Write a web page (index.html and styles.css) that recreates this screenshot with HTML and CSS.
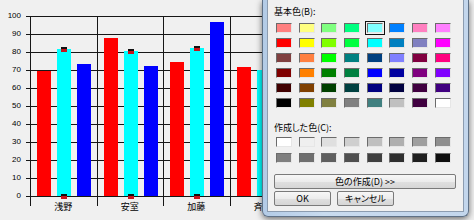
FILE: index.html
```html
<html>
<head>
  <meta charset="UTF-8">
  <title>Chart</title>
  <link rel="stylesheet" href="styles.css">
</head>
<body>
  <div class="chart">
    <div class="yaxis">
      <div>100</div><div>90</div><div>80</div><div>70</div><div>60</div><div>50</div>
      <div>40</div><div>30</div><div>20</div><div>10</div><div>0</div>
    </div>
    <div class="area">
      <div class="plot">
        <div class="cat">
          <div class="bar red" style="height:125px"></div>
          <div class="bar cyan mark" style="height:147px"></div>
          <div class="bar blue" style="height:132px"></div>
        </div>
        <div class="cat">
          <div class="bar red" style="height:158px"></div>
          <div class="bar cyan mark" style="height:145px"></div>
          <div class="bar blue" style="height:130px"></div>
        </div>
        <div class="cat">
          <div class="bar red" style="height:134px"></div>
          <div class="bar cyan mark" style="height:148px"></div>
          <div class="bar blue" style="height:174px"></div>
        </div>
        <div class="cat">
          <div class="bar red" style="height:129px"></div>
          <div class="bar cyan" style="height:126px"></div>
          <div class="bar blue" style="height:120px"></div>
        </div>
        <div class="cat"></div>
        <div class="cat"></div>
      </div>
      <div class="names">
        <div>浅野</div><div>安室</div><div>加藤</div><div>斉藤</div><div></div><div></div>
      </div>
    </div>
  </div>

  <div class="dlg">
    <div class="client">
      <div class="lbl">基本色(B):</div>
      <div class="swatches">
        <span style="background:#ff8080"></span><span style="background:#ffff80"></span><span style="background:#80ff80"></span><span style="background:#00ff80"></span><span class="sel" style="background:#80ffff"></span><span style="background:#0080ff"></span><span style="background:#ff80c0"></span><span style="background:#ff80ff"></span>
        <span style="background:#ff0000"></span><span style="background:#ffff00"></span><span style="background:#80ff00"></span><span style="background:#00ff40"></span><span style="background:#00ffff"></span><span style="background:#0080c0"></span><span style="background:#8080c0"></span><span style="background:#ff00ff"></span>
        <span style="background:#804040"></span><span style="background:#ff8040"></span><span style="background:#00ff00"></span><span style="background:#008080"></span><span style="background:#004080"></span><span style="background:#8080ff"></span><span style="background:#800040"></span><span style="background:#ff0080"></span>
        <span style="background:#800000"></span><span style="background:#ff8000"></span><span style="background:#008000"></span><span style="background:#008040"></span><span style="background:#0000ff"></span><span style="background:#0000a0"></span><span style="background:#800080"></span><span style="background:#8000ff"></span>
        <span style="background:#400000"></span><span style="background:#804000"></span><span style="background:#004000"></span><span style="background:#004040"></span><span style="background:#000080"></span><span style="background:#000040"></span><span style="background:#400040"></span><span style="background:#400080"></span>
        <span style="background:#000000"></span><span style="background:#808000"></span><span style="background:#808040"></span><span style="background:#808080"></span><span style="background:#408080"></span><span style="background:#c0c0c0"></span><span style="background:#400040"></span><span style="background:#ffffff"></span>
      </div>
      <div class="lbl custom-lbl">作成した色(C):</div>
      <div class="swatches custom">
        <span style="background:#ffffff"></span><span style="background:#efefef"></span><span style="background:#dfdfdf"></span><span style="background:#cfcfcf"></span><span style="background:#bfbfbf"></span><span style="background:#afafaf"></span><span style="background:#9f9f9f"></span><span style="background:#8f8f8f"></span>
        <span style="background:#7f7f7f"></span><span style="background:#6f6f6f"></span><span style="background:#5f5f5f"></span><span style="background:#4f4f4f"></span><span style="background:#3f3f3f"></span><span style="background:#2f2f2f"></span><span style="background:#1f1f1f"></span><span style="background:#0f0f0f"></span>
      </div>
      <button class="btn wide">色の作成(D) &gt;&gt;</button>
      <div class="btnrow">
        <button class="btn">OK</button>
        <button class="btn">キャンセル</button>
      </div>
    </div>
  </div>
</body>
</html>
```

FILE: styles.css
```css
html, body {
  margin: 0;
  height: 100%;
  overflow: hidden;
  background: #f0f0f0;
}
body {
  position: relative;
  font-family: "Noto Sans CJK JP", sans-serif;
  color: #000;
}

/* chart */
.chart {
  display: flex;
  padding-top: 16px;
}
.yaxis {
  width: 26px;
  flex: none;
  margin-top: -9px;
  font-family: "Liberation Sans", sans-serif;
  font-size: 8px;
}
.yaxis div {
  height: 18px;
  line-height: 18px;
  text-align: right;
  padding-right: 5px;
}
.area {
  display: flex;
  flex-direction: column;
}
.plot {
  display: flex;
  height: 181px;
  padding-left: 4px;
  background: repeating-linear-gradient(to bottom, #161616 0 1px, transparent 1px 18px);
}
.cat {
  box-sizing: border-box;
  width: 66.5px;
  height: 190px;
  flex: none;
  border-left: 1px solid #161616;
  padding: 0 0 10px 6px;
  display: flex;
  align-items: flex-end;
  gap: 6px;
}
.bar {
  width: 14px;
  position: relative;
}
.red { background: #ff0000; }
.cyan { background: #00ffff; }
.blue { background: #0000ff; }
.mark:before, .mark:after {
  content: '';
  position: absolute;
  left: 4px;
  width: 6px;
  height: 5px;
  background: linear-gradient(to bottom, #111 0 2px, #c8141c 2px);
}
.mark:before { top: -2px; }
.mark:after { bottom: -3px; }

.names {
  display: flex;
  padding-left: 4px;
  margin-top: 4px;
  font-size: 9px;
  line-height: 12px;
}
.names div {
  width: 66.5px;
  flex: none;
  text-align: center;
}

/* colour dialog */
.dlg {
  position: absolute;
  left: 262px;
  top: 0;
  width: 207px;
  height: 217px;
  box-sizing: border-box;
  border: 1px solid #5f7187;
  border-top: 0;
  border-radius: 0 0 6px 6px;
  padding: 0 4px 4px;
  background: linear-gradient(to right, #b3cbe6, #c9dbef 30%, #c3d6ec);
  box-shadow: 0 2px 6px rgba(0, 0, 0, .55);
}
.client {
  box-sizing: border-box;
  height: 100%;
  border: 1px solid #8c9cb0;
  border-top: 0;
  background: #f0f0f0;
  padding: 6px 0 0 5px;
  font-size: 9px;
  font-feature-settings: "palt";
}
.lbl {
  line-height: 12px;
  padding-left: 1px;
}
.custom-lbl {
  margin-top: 14px;
}
.swatches {
  display: grid;
  grid-template-columns: repeat(8, 16px);
  grid-auto-rows: 10px;
  column-gap: 6.7px;
  row-gap: 5px;
  margin: 5px 0 0 3px;
}
.swatches.custom {
  margin-top: 3px;
  row-gap: 6px;
}
.swatches span {
  box-sizing: border-box;
  border: 1px solid;
  border-color: #6b6b6b #e6e6e6 #e6e6e6 #6b6b6b;
}
.swatches span.sel {
  outline: 1px solid #111;
  outline-offset: 1px;
}
.btn {
  display: block;
  box-sizing: border-box;
  height: 15px;
  padding: 0;
  border: 1px solid #7a7a7a;
  border-radius: 2px;
  background: linear-gradient(to bottom, #f7f7f7, #ececec 50%, #e0e0e0 50%, #d6d6d6);
  font-family: "Noto Sans CJK JP", sans-serif;
  font-size: 9px;
  font-feature-settings: "palt";
  line-height: 13px;
  color: #000;
}
.btn.wide {
  width: 182px;
  margin: 11px 0 0 1px;
}
.btnrow {
  display: flex;
  gap: 6px;
  margin: 2px 0 0 1px;
}
.btnrow .btn {
  width: 57px;
}
```
